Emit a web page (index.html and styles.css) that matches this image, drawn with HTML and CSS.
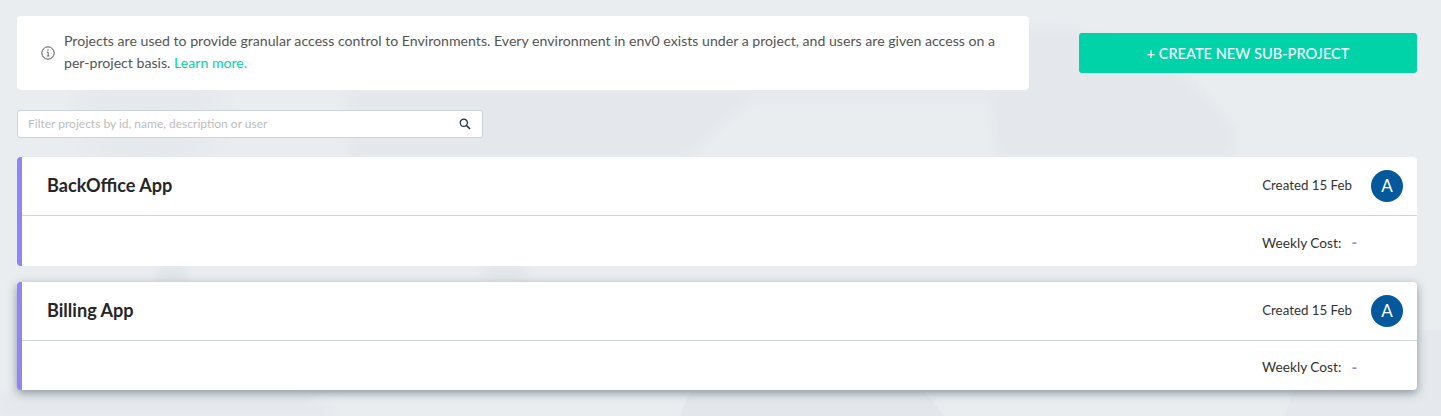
FILE: index.html
```html
<!DOCTYPE html>
<html lang="en">
<head>
<meta charset="utf-8">
<title>Projects</title>
<link rel="stylesheet" href="styles.css">
</head>
<body>
<svg class="backdrop" width="1441" height="416" viewBox="0 0 1441 416" aria-hidden="true">
  <defs>
    <filter id="soft"><feGaussianBlur stdDeviation="14"/></filter>
    <filter id="softer"><feGaussianBlur stdDeviation="5"/></filter>
  </defs>
  <path d="M985 30 Q1150 10 1235 130 V157 H995 Z" fill="#e4e8ec" filter="url(#softer)"/>
  <circle cx="150" cy="110" r="70" fill="#e5e9ed" filter="url(#soft)"/>
  <path d="M345 90 H1000 V100 H750 L690 157 H350 Z" fill="#e4e8ec" filter="url(#softer)"/>
  <ellipse cx="172" cy="274" rx="16" ry="9" fill="#e0e5e9" filter="url(#softer)"/>
  <ellipse cx="505" cy="272" rx="24" ry="10" fill="#e2e6ea" filter="url(#softer)"/>
  <path d="M0 392 H305 L340 416 H0 Z" fill="#e5e9ed" filter="url(#softer)"/>
  <path d="M690 392 H925 L945 416 H680 Z" fill="#e3e7eb"/>
  <path d="M1310 330 H1441 V416 H1285 Z" fill="#e5e9ed"/>
</svg>
<main class="page">
  <div class="top">
    <div class="banner">
      <svg class="info" width="14" height="14" viewBox="0 0 14 14" fill="none" stroke="#555" stroke-width="1">
        <circle cx="7" cy="7" r="6.2"/>
        <path d="M5.8 6.2H7.2V10M5.8 10H8.4" stroke-width="0.9"/>
        <circle cx="7" cy="4.1" r="0.75" fill="#555" stroke="none"/>
      </svg>
      <p class="banner-text">Projects are used to provide granular access control to Environments. Every environment in env0 exists under a project, and users are given access on a per-project basis. <a class="learn" href="#">Learn more.</a></p>
    </div>
    <button class="create">+ CREATE NEW SUB-PROJECT</button>
  </div>
  <div class="filter">
    <span class="placeholder">Filter projects by id, name, description or user</span>
    <svg width="12" height="12" viewBox="0 0 12 12" fill="none" stroke="#1d2b3a" stroke-width="1.2">
      <circle cx="4.8" cy="4.8" r="3.6"/>
      <path d="M7.5 7.5L11 11" stroke-width="1.6"/>
    </svg>
  </div>
  <section class="card">
    <header class="card-head">
      <h2 class="name">BackOffice App</h2>
      <span class="created">Created 15 Feb</span>
      <span class="avatar">A</span>
    </header>
    <div class="card-foot"><span class="cost">Weekly Cost:</span><span class="dash">-</span></div>
  </section>
  <section class="card card-hover">
    <header class="card-head">
      <h2 class="name">Billing App</h2>
      <span class="created">Created 15 Feb</span>
      <span class="avatar">A</span>
    </header>
    <div class="card-foot"><span class="cost">Weekly Cost:</span><span class="dash">-</span></div>
  </section>
</main>
</body>
</html>
```
FILE: styles.css
```css
* { box-sizing: border-box; }
html, body { margin: 0; height: 416px; overflow: hidden; }
body {
  background: #e9edf0;
  font-family: "Lato", "Liberation Sans", sans-serif;
  position: relative;
}
.backdrop { position: absolute; left: 0; top: 0; }
.page {
  position: relative;
  padding: 16px 24px 0 17px;
  display: flex;
  flex-direction: column;
}
.top { display: flex; align-items: center; justify-content: space-between; }
.banner {
  width: 1012px;
  height: 74px;
  background: #fff;
  border-radius: 4px;
  display: flex;
  align-items: center;
  padding: 0 20px 0 24px;
  gap: 9px;
}
.info { flex: none; }
.banner-text { margin: 0 0 2px; font-size: 14.14px; line-height: 22px; color: #555; }
.learn { color: #00d3a7; text-decoration: none; }
.create {
  width: 338px;
  height: 40px;
  padding: 0;
  border: 0;
  border-radius: 3px;
  background: #00d3a7;
  color: #fff;
  font: 500 14.6px "Lato", sans-serif;
}
.filter {
  margin-top: 20px;
  width: 466px;
  height: 28px;
  background: #fff;
  border: 1px solid #ccd5de;
  border-radius: 3px;
  display: flex;
  align-items: center;
  justify-content: space-between;
  padding: 0 11px 0 10px;
}
.placeholder { font-size: 12px; color: #bdbdbd; margin-bottom: 2px; }
.card {
  margin-top: 19px;
  height: 109px;
  background: #fff;
  border-left: 5px solid #8f84f8;
  border-radius: 4px;
  display: flex;
  flex-direction: column;
}
.card-hover {
  margin-top: 16px;
  height: 108px;
  box-shadow: 0 3px 10px rgba(60, 72, 88, .55);
}
.card-head {
  height: 59px;
  flex: none;
  border-bottom: 1px solid #ccd6dd;
  display: flex;
  align-items: center;
  padding: 0 14px 0 25px;
}
.name { margin: 0 0 3px; flex: 1; font-size: 18.1px; font-weight: 700; color: #262626; }
.created { font-size: 13.3px; color: #333; margin: 0 19px 3px 0; }
.avatar {
  width: 32px;
  height: 32px;
  border-radius: 50%;
  background: #04599c;
  color: #fff;
  font-size: 17px;
  padding-bottom: 1px;
  display: flex;
  align-items: center;
  justify-content: center;
}
.card-foot {
  flex: 1;
  display: flex;
  align-items: center;
  justify-content: flex-end;
  padding: 2px 60px 0 0;
}
.cost { font-size: 13.7px; color: #333; }
.dash { font-size: 15px; font-weight: 700; color: #8f84f8; margin-left: 10px; }
```
